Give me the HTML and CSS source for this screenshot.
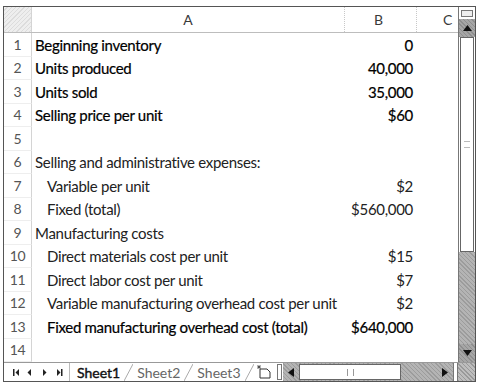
FILE: index.html
```html
<!DOCTYPE html>
<html lang="en">
<head>
    <meta charset="UTF-8">
    <title>Sheet1</title>
    <link rel="stylesheet" href="styles.css">
</head>
<body>

    <div class="sheet">
        <div class="main">
            <div class="grid">
                <div class="row head">
                    <div class="rh corner"></div>
                    <div class="ca">A</div>
                    <div class="cb">B</div>
                    <div class="cc">C</div>
                </div>
                <div class="row dark"><div class="rh">1</div><div class="ca">Beginning inventory</div><div class="cb">0</div><div class="cc"></div></div>
                <div class="row dark"><div class="rh">2</div><div class="ca">Units produced</div><div class="cb">40,000</div><div class="cc"></div></div>
                <div class="row dark"><div class="rh">3</div><div class="ca">Units sold</div><div class="cb">35,000</div><div class="cc"></div></div>
                <div class="row dark"><div class="rh">4</div><div class="ca">Selling price per unit</div><div class="cb">$60</div><div class="cc"></div></div>
                <div class="row"><div class="rh">5</div><div class="ca"></div><div class="cb"></div><div class="cc"></div></div>
                <div class="row"><div class="rh">6</div><div class="ca">Selling and administrative expenses:</div><div class="cb"></div><div class="cc"></div></div>
                <div class="row"><div class="rh">7</div><div class="ca ind">Variable per unit</div><div class="cb">$2</div><div class="cc"></div></div>
                <div class="row"><div class="rh">8</div><div class="ca ind">Fixed (total)</div><div class="cb">$560,000</div><div class="cc"></div></div>
                <div class="row"><div class="rh">9</div><div class="ca">Manufacturing costs</div><div class="cb"></div><div class="cc"></div></div>
                <div class="row"><div class="rh">10</div><div class="ca ind">Direct materials cost per unit</div><div class="cb">$15</div><div class="cc"></div></div>
                <div class="row"><div class="rh">11</div><div class="ca ind">Direct labor cost per unit</div><div class="cb">$7</div><div class="cc"></div></div>
                <div class="row"><div class="rh">12</div><div class="ca ind">Variable manufacturing overhead cost per unit</div><div class="cb">$2</div><div class="cc"></div></div>
                <div class="row dark"><div class="rh">13</div><div class="ca ind">Fixed manufacturing overhead cost (total)</div><div class="cb">$640,000</div><div class="cc"></div></div>
                <div class="row"><div class="rh">14</div><div class="ca"></div><div class="cb"></div><div class="cc"></div></div>
            </div>

            <div class="vscroll">
                <div class="vsplit"></div>
                <div class="vbtn">
                    <svg width="9" height="6" viewBox="0 0 9 6"><polygon points="0,6 4.5,0 9,6" fill="#111"/></svg>
                </div>
                <div class="vthumb"><span class="grip-h"></span></div>
                <div class="vtrack"></div>
                <div class="vbtn">
                    <svg width="9" height="6" viewBox="0 0 9 6"><polygon points="0,0 4.5,6 9,0" fill="#111"/></svg>
                </div>
            </div>
        </div>

        <div class="tabbar">
            <div class="nav">
                <svg width="50" height="9" viewBox="0 0 50 9">
                    <rect x="0" y="1" width="1.5" height="7" fill="#222"/>
                    <polygon points="6,1 2.5,4.5 6,8" fill="#222"/>
                    <polygon points="18,1 14.5,4.5 18,8" fill="#222"/>
                    <polygon points="30,1 33.5,4.5 30,8" fill="#222"/>
                    <polygon points="44,1 47.5,4.5 44,8" fill="#222"/>
                    <rect x="48" y="1" width="1.5" height="7" fill="#222"/>
                </svg>
            </div>
            <div class="tabs">
                <div class="tab active">Sheet1</div>
                <svg class="slant" width="9" height="17" viewBox="0 0 9 17"><line x1="0" y1="17" x2="9" y2="0" stroke="#aaa"/></svg>
                <div class="tab">Sheet2</div>
                <svg class="slant" width="9" height="17" viewBox="0 0 9 17"><line x1="0" y1="17" x2="9" y2="0" stroke="#aaa"/></svg>
                <div class="tab">Sheet3</div>
                <svg class="slant" width="9" height="17" viewBox="0 0 9 17"><line x1="0" y1="17" x2="9" y2="0" stroke="#aaa"/></svg>
                <div class="newtab">
                    <svg width="16" height="14" viewBox="0 0 16 14">
                        <path d="M4 4 h7 l3 3 v6 h-10 z" fill="#fff" stroke="#333" stroke-width="1"/>
                        <path d="M3 0 v4 M1 2 h4 M1.5 0.5 l3 3 M4.5 0.5 l-3 3" stroke="#444" stroke-width="0.8"/>
                    </svg>
                </div>
            </div>
            <div class="hsplit"></div>
            <div class="hscroll">
                <div class="hbtn">
                    <svg width="6" height="9" viewBox="0 0 6 9"><polygon points="6,0 0,4.5 6,9" fill="#111"/></svg>
                </div>
                <div class="hthumb"><span class="grip-v"></span></div>
                <div class="htrack"></div>
                <div class="hbtn">
                    <svg width="6" height="9" viewBox="0 0 6 9"><polygon points="0,0 6,4.5 0,9" fill="#111"/></svg>
                </div>
                <div class="hend"></div>
            </div>
            <div class="sizer"></div>
        </div>
    </div>

</body>
</html>
```

FILE: styles.css
```css
body {
    margin: 0;
    background-color: #ffffff;
    font-family: Lato, "Open Sans", sans-serif;
    color: #222;
}
.sheet {
    margin: 6px 0 0 3px;
    width: 471px;
    border: 1px solid #555;
}
.main {
    display: flex;
}
.grid {
    width: 454px;
    overflow: hidden;
}
.row {
    display: flex;
    height: 23.5px;
    font-size: 15px;
    letter-spacing: -0.3px;
}
.row > div {
    display: flex;
    align-items: center;
    box-sizing: border-box;
    white-space: nowrap;
}
.row.dark {
    color: #000;
    -webkit-text-stroke: 0.2px #000;
}
.row.head {
    height: 26px;
    border-bottom: 1px solid #bdbdbd;
    box-sizing: border-box;
    font-size: 14px;
    letter-spacing: 0;
    color: #3a3a3a;
}
.rh {
    width: 28px;
    flex: none;
    justify-content: center;
    font-size: 14px;
    color: #555;
    border-right: 1px solid #d4d4d4;
    border-bottom: 1px solid #eeeeee;
}
.row.dark .rh {
    -webkit-text-stroke: 0;
    color: #555;
}
.rh.corner {
    background: repeating-linear-gradient(135deg, #eee 0 2px, #dcdcdc 2px 3px);
    border-bottom: none;
}
.ca {
    width: 313px;
    flex: none;
    padding-left: 3px;
}
.ca.ind {
    padding-left: 15px;
}
.head .ca, .head .cb {
    justify-content: center;
    border-right: 1px dotted #c8c8c8;
    padding-left: 0;
}
.cb {
    width: 72px;
    flex: none;
    justify-content: flex-end;
    padding-right: 4px;
}
.cc {
    width: 41px;
    flex: none;
}
.head .cc {
    padding-left: 26px;
}

/* vertical scrollbar */
.vscroll {
    width: 17px;
    display: flex;
    flex-direction: column;
    border-left: 1px solid #777;
    box-sizing: border-box;
    background: #fff;
}
.vsplit {
    height: 5px;
    margin: 3px 2px 2px;
    border: 1px solid #777;
    background: #eee;
}
.vbtn {
    height: 18px;
    display: flex;
    align-items: center;
    justify-content: center;
    background: repeating-linear-gradient(45deg, #8e8e8e 0 1px, #a6a6a6 1px 3px);
}
.vthumb {
    height: 213px;
    margin: 0 1px;
    border: 1px solid #666;
    background: #fff;
    display: flex;
    align-items: center;
    justify-content: center;
}
.grip-h {
    width: 6px;
    height: 5px;
    border-top: 1px solid #bbb;
    border-bottom: 1px solid #bbb;
}
.vtrack {
    flex: 1;
    background: repeating-linear-gradient(45deg, #9c9c9c 0 1px, #b4b4b4 1px 3px);
}

/* bottom bar */
.tabbar {
    display: flex;
    height: 18px;
    border-top: 1px solid #999;
    align-items: stretch;
    font-size: 14px;
}
.nav {
    width: 66px;
    flex: none;
    display: flex;
    align-items: center;
    padding-left: 9px;
    border-right: 1px solid #bbb;
    box-sizing: border-box;
}
.tabs {
    display: flex;
    align-items: center;
    width: 207px;
    flex: none;
    overflow: hidden;
    padding-left: 5px;
    box-sizing: border-box;
}
.tab {
    flex: none;
    color: #666;
    padding: 0 2px;
    line-height: 17px;
}
.tab.active {
    color: #111;
    -webkit-text-stroke: 0.4px #111;
}
.slant {
    flex: none;
    margin: 0 2px;
}
.newtab {
    flex: none;
    display: flex;
    align-items: center;
}
.hsplit {
    width: 3px;
    flex: none;
    margin: 1px 1px 1px 0;
    border: 1px solid #777;
    background: #fff;
}
.hscroll {
    flex: 1;
    display: flex;
    background: repeating-linear-gradient(45deg, #9c9c9c 0 1px, #b4b4b4 1px 3px);
}
.hbtn {
    width: 16px;
    display: flex;
    align-items: center;
    justify-content: center;
}
.hthumb {
    width: 100px;
    margin: 1px 0;
    border: 1px solid #666;
    background: #fff;
    display: flex;
    align-items: center;
    justify-content: center;
}
.grip-v {
    width: 5px;
    height: 7px;
    border-left: 1px solid #999;
    border-right: 1px solid #999;
}
.htrack {
    flex: 1;
}
.hend {
    width: 3px;
    background: #fff;
    border-left: 1px solid #777;
}
.sizer {
    width: 17px;
    flex: none;
    border-left: 1px solid #777;
    background: repeating-linear-gradient(45deg, #999 0 1px, #bdbdbd 1px 3px);
}
```
